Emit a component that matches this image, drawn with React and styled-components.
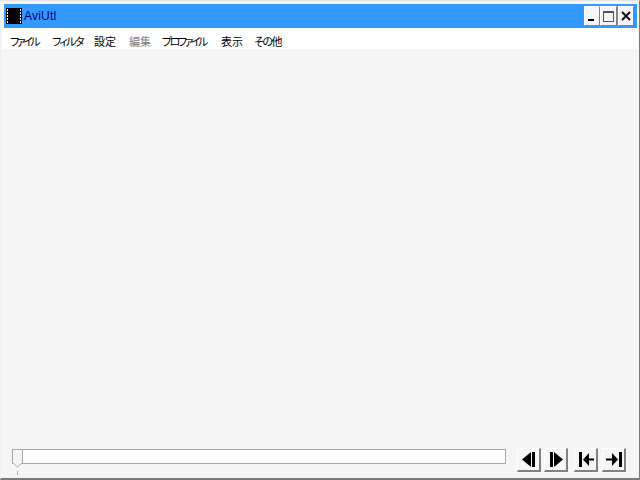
import React from 'react';
import styled, { createGlobalStyle } from 'styled-components';

const Global = createGlobalStyle`
  html, body { margin: 0; padding: 0; width: 640px; height: 480px; overflow: hidden; background: #f5f5f5; }
  #root { width: 640px; height: 480px; }
`;

const Win = styled.div`
  box-sizing: border-box;
  width: 640px;
  height: 480px;
  display: flex;
  flex-direction: column;
  background: #f5f5f5;
  border-top: 1px solid #e4e4e4;
  border-left: 1px solid #f0f0f0;
  border-right: 1px solid #7a7a7a;
  border-bottom: 2px solid #7a7a7a;
  font-family: "Noto Sans CJK JP", "Liberation Sans", sans-serif;
`;

const TitleWrap = styled.div`
  background: #f5f5f5;
  padding: 3px 2px 0 3px;
`;

const TitleBar = styled.div`
  height: 24px;
  background: #3399ff;
  display: flex;
  align-items: center;
  padding: 0 3px 0 2px;
`;

const TitleText = styled.span`
  font-family: "Liberation Sans", sans-serif;
  font-size: 12px;
  letter-spacing: 0.2px;
  color: #000080;
  margin-left: 2px;
  flex: 1;
`;

const CaptionBtn = styled.div`
  box-sizing: border-box;
  width: ${p => p.$w || 16}px;
  height: 20px;
  margin-left: ${p => p.$gap || 0}px;
  background: #f5f5f5;
  border-top: 1px solid #ffffff;
  border-left: 1px solid #ffffff;
  border-right: 1px solid #808080;
  border-bottom: 1px solid #808080;
  display: flex;
  align-items: center;
  justify-content: center;
`;

const MenuBar = styled.div`
  box-sizing: border-box;
  height: 21px;
  margin: 0 1px;
  background: #ffffff;
  display: flex;
  align-items: center;
  padding: 6px 0 0 8px;
`;

const MenuItem = styled.span`
  font-size: 11px;
  font-feature-settings: "palt";
  letter-spacing: ${p => p.$ls || 0}px;
  line-height: 15px;
  width: ${p => p.$w}px;
  color: ${p => (p.$disabled ? '#808080' : '#000000')};
  white-space: nowrap;
`;

const Content = styled.div`
  flex: 1;
  background: #f5f5f5;
`;

const Controls = styled.div`
  height: 30px;
  display: flex;
  align-items: flex-start;
  padding: 0 11px;
`;

const SliderArea = styled.div`
  position: relative;
  width: 494px;
  height: 30px;
  margin-right: 11px;
`;

const Track = styled.div`
  box-sizing: border-box;
  height: 15px;
  margin-top: 1px;
  background: #ffffff;
  border: 1px solid #a6a6a6;
`;

const Thumb = styled.svg`
  position: absolute;
  left: 0;
  top: 1px;
`;

const NavBtn = styled.div`
  box-sizing: border-box;
  width: 24px;
  height: 24px;
  margin-left: ${p => p.$gap || 0}px;
  background: #f5f5f5;
  border-top: 1px solid #ffffff;
  border-left: 1px solid #ffffff;
  border-right: 2px solid #808080;
  border-bottom: 2px solid #808080;
  display: flex;
`;

const FilmIcon = () => (
  <svg width="16" height="16" viewBox="0 0 16 16" shapeRendering="crispEdges">
    <rect width="16" height="16" fill="#000" />
    {[1, 4, 7, 10, 13].map(y => (
      <g key={y} fill="#fff">
        <rect x="1" y={y} width="1" height="2" />
        <rect x="14" y={y} width="1" height="2" />
      </g>
    ))}
  </svg>
);

const Glyph = ({ children }) => (
  <svg width="21" height="21" viewBox="0 0 21 21" fill="#000">{children}</svg>
);

const menus = [
  ['ファイル', 42, -2.5], ['フィルタ', 42, -1.7], ['設定', 35, 0], ['編集', 33, 0, true],
  ['プロファイル', 59, -2.5], ['表示', 33, 0], ['その他', 32, -1.5],
];

export default function App() {
  return (
    <Win>
      <Global />
      <TitleWrap>
        <TitleBar>
          <FilmIcon />
          <TitleText>AviUtl</TitleText>
          <CaptionBtn>
            <svg width="10" height="10" viewBox="0 0 10 10" shapeRendering="crispEdges"><rect x="1" y="8" width="6" height="2" fill="#000" /></svg>
          </CaptionBtn>
          <CaptionBtn $w={17}>
            <svg width="11" height="11" viewBox="0 0 11 11" shapeRendering="crispEdges"><path d="M0.5 0.5h10v10h-10z M0 1h11" fill="none" stroke="#555" /></svg>
          </CaptionBtn>
          <CaptionBtn $gap={1}>
            <svg width="10" height="10" viewBox="0 0 10 10"><path d="M1 1l8 8M9 1l-8 8" stroke="#000" strokeWidth="1.8" fill="none" /></svg>
          </CaptionBtn>
        </TitleBar>
      </TitleWrap>
      <MenuBar>
        {menus.map(([t, w, ls, d]) => <MenuItem key={t} $w={w} $ls={ls} $disabled={d}>{t}</MenuItem>)}
      </MenuBar>
      <Content />
      <Controls>
        <SliderArea>
          <Track />
          <Thumb width="12" height="28" viewBox="0 0 12 28">
            <path d="M0.5 0.5H10.5V13.5L5.5 18L0.5 13.5Z" fill="#f5f5f5" stroke="#a6a6a6" />
            <rect x="5" y="22" width="1" height="4" fill="#a6a6a6" />
          </Thumb>
        </SliderArea>
        <NavBtn>
          <Glyph><path d="M4 10.5L13 3V18Z" /><rect x="14" y="3" width="3" height="15" /></Glyph>
        </NavBtn>
        <NavBtn $gap={3}>
          <Glyph><rect x="5" y="3" width="3" height="15" /><path d="M9 3L18 10.5L9 18Z" /></Glyph>
        </NavBtn>
        <NavBtn $gap={6}>
          <Glyph><rect x="4" y="3" width="3" height="15" /><path d="M8 10.5L14 4V9.5H19V11.5H14V17Z" /></Glyph>
        </NavBtn>
        <NavBtn $gap={4}>
          <Glyph><rect x="16" y="3" width="3" height="15" /><path d="M15 10.5L9 4V9.5H3V11.5H9V17Z" /></Glyph>
        </NavBtn>
      </Controls>
    </Win>
  );
}
